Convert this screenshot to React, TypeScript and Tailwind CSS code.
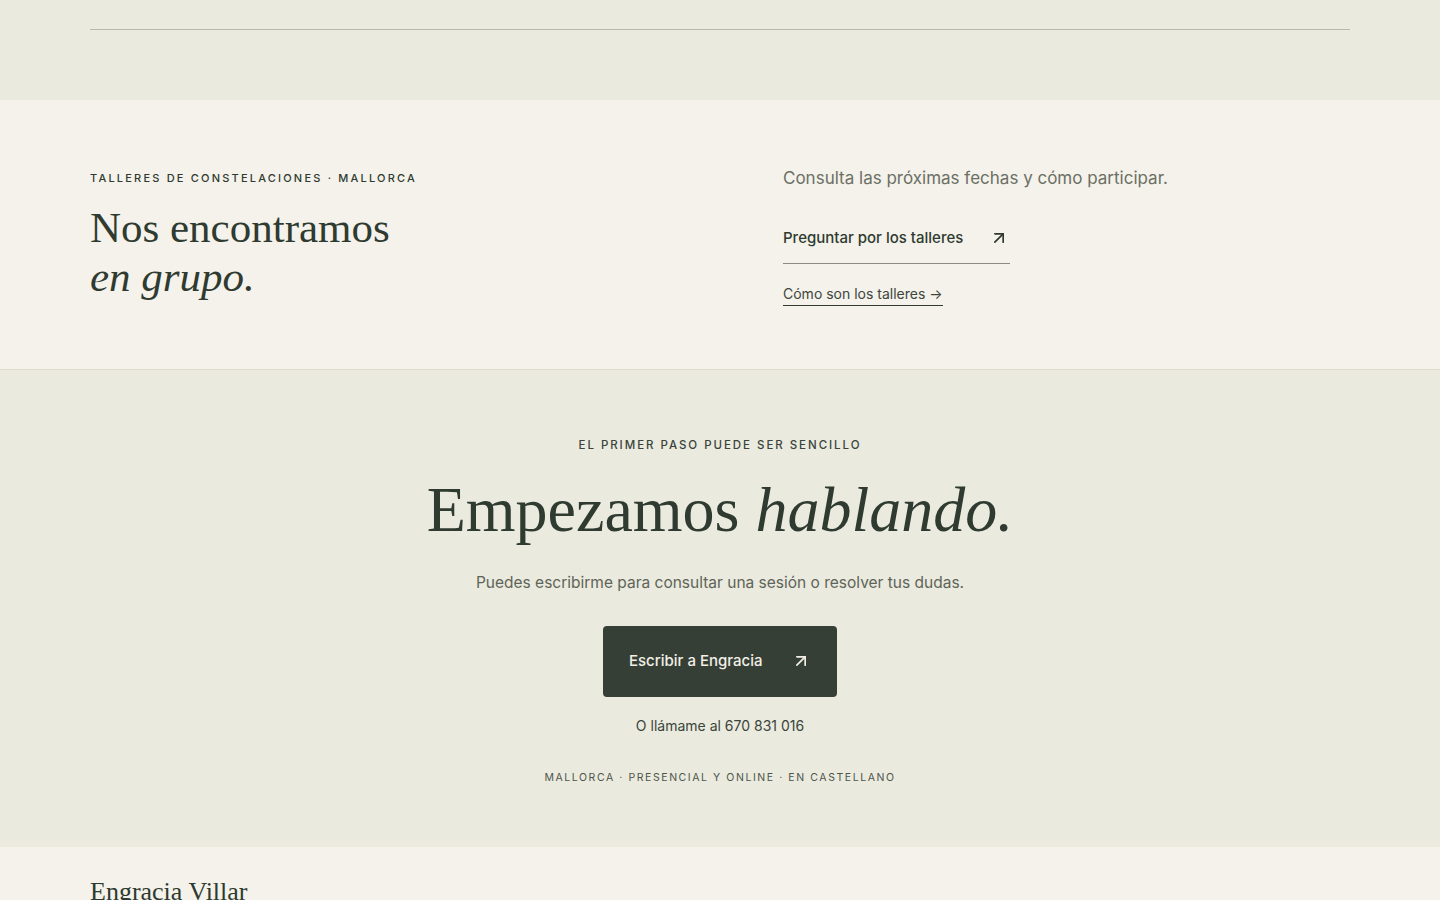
import { ArrowUpRight } from "lucide-react";

const sans = "font-['Inter','Noto_Sans',sans-serif]";
const serif = "font-['Liberation_Serif','DejaVu_Serif',serif]";

export default function App() {
  return (
    <div className={`min-h-screen bg-[#f4f2ea] text-[#2f3a30] ${sans}`}>
      {/* tail of previous section */}
      <section className="bg-[#eaeade] px-[90px] pt-[29px] pb-[70px]">
        <div className="h-px bg-[#b9baae]" />
      </section>

      {/* workshops */}
      <section className="border-b border-[#dcdcd0] bg-[#f4f2ea] px-[90px] pt-[70px] pb-[63px]">
        <div className="grid grid-cols-2 gap-x-[126px]">
          <div>
            <p className="text-[11px] font-medium uppercase leading-4 tracking-[0.2em] text-[#2f3a30]">
              Talleres de constelaciones · Mallorca
            </p>
            <h2 className={`${serif} mt-[17px] text-[43px] leading-[49px] text-[#2f3a30]`}>
              Nos encontramos
              <br />
              <em>en grupo.</em>
            </h2>
          </div>
          <div>
            <p className="text-[17px] leading-[17px] text-[#6b6f65]">
              Consulta las próximas fechas y cómo participar.
            </p>
            <a
              href="#"
              className="mt-[40px] flex w-[227px] items-center justify-between border-b border-[#8a8c84] pb-[13px] text-[15px] font-medium text-[#2f3a30]"
            >
              <span>Preguntar por los talleres</span>
              <ArrowUpRight className="mr-[1px] h-[20px] w-[20px]" strokeWidth={2} />
            </a>
            <a
              href="#"
              className="mt-[19px] inline-block border-b border-[#2f3a30] pb-px text-[14px] text-[#3d463e]"
            >
              Cómo son los talleres →
            </a>
          </div>
        </div>
      </section>

      {/* contact call */}
      <section className="flex flex-col items-center bg-[#eaeade] pt-[67px] pb-[61px] text-center">
        <p className="text-[11.5px] font-medium uppercase leading-4 tracking-[0.17em] text-[#3a443b]">
          El primer paso puede ser sencillo
        </p>
        <h2 className={`${serif} mt-[19px] text-[64px] leading-[76px] text-[#2f3a30]`}>
          Empezamos <em>hablando.</em>
        </h2>
        <p className="mt-[23px] text-[15.5px] leading-6 text-[#5f6459]">
          Puedes escribirme para consultar una sesión o resolver tus dudas.
        </p>
        <a
          href="#"
          className="mt-[31px] flex h-[71px] w-[234px] items-center justify-between rounded-[4px] bg-[#363f36] px-[26px] text-[15px] font-medium text-[#f1efe6]"
        >
          <span>Escribir a Engracia</span>
          <ArrowUpRight className="h-[20px] w-[20px]" strokeWidth={2} />
        </a>
        <p className="mt-[19px] text-[14px] leading-5 text-[#3a443b]">O llámame al 670 831 016</p>
        <p className="mt-[34px] text-[10.5px] uppercase leading-4 tracking-[0.15em] text-[#4e554c]">
          Mallorca · Presencial y online · En castellano
        </p>
      </section>

      {/* footer */}
      <footer className="bg-[#f4f2ea] px-[90px] pt-[29px] pb-[40px]">
        <p className={`${serif} text-[26px] leading-8 text-[#2f3a30]`}>Engracia Villar</p>
      </footer>
    </div>
  );
}
